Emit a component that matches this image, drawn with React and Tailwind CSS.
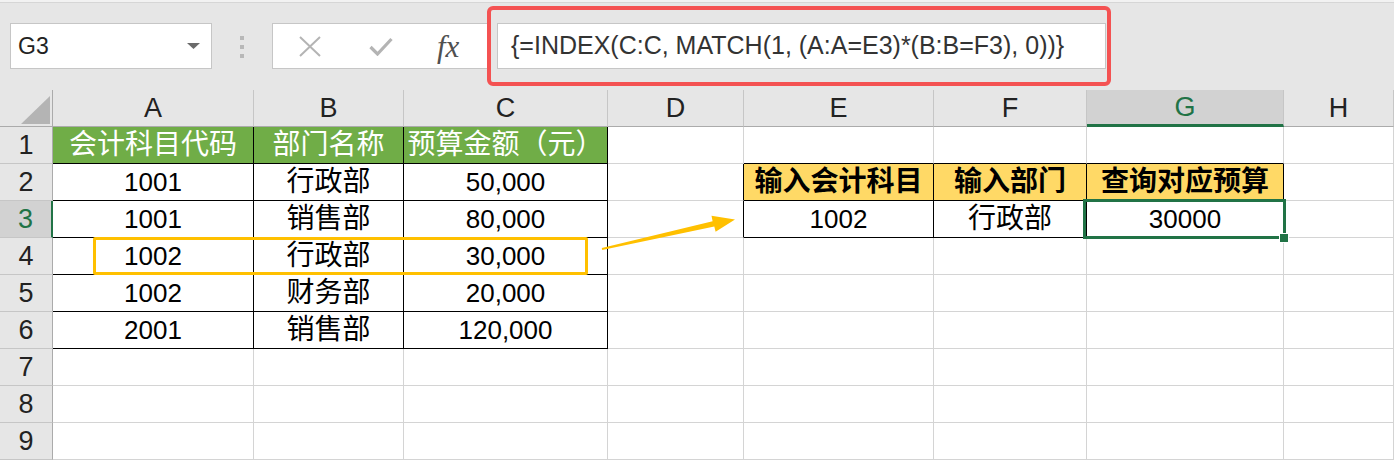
import React from 'react';

const FONT = { fontFamily: '"Liberation Sans", "Noto Sans CJK SC", sans-serif' };

const cols = ['A', 'B', 'C', 'D', 'E', 'F', 'G', 'H'];

const cells = {
  A1: { t: '会计科目代码', bg: 'green' },
  B1: { t: '部门名称', bg: 'green' },
  C1: { t: '预算金额（元）', bg: 'green' },
  A2: { t: '1001' }, B2: { t: '行政部' }, C2: { t: '50,000' },
  A3: { t: '1001' }, B3: { t: '销售部' }, C3: { t: '80,000' },
  A4: { t: '1002' }, B4: { t: '行政部' }, C4: { t: '30,000' },
  A5: { t: '1002' }, B5: { t: '财务部' }, C5: { t: '20,000' },
  A6: { t: '2001' }, B6: { t: '销售部' }, C6: { t: '120,000' },
  E2: { t: '输入会计科目', bg: 'yellow' },
  F2: { t: '输入部门', bg: 'yellow' },
  G2: { t: '查询对应预算', bg: 'yellow' },
  E3: { t: '1002' }, F3: { t: '行政部' }, G3: { t: '30000' },
};

const inTable = (c, r) => (c <= 2 && r >= 1 && r <= 6) || (c >= 4 && c <= 6 && r >= 2 && r <= 3);

const Cell = ({ c, r }) => {
  const key = cols[c] + r;
  const cell = cells[key];
  const rightBlack = inTable(c, r) || (c === 3 && (r === 2 || r === 3));
  const bottomBlack = inTable(c, r) || (r === 1 && c >= 4 && c <= 6);
  const isNum = cell && /^[0-9,]+$/.test(cell.t);
  let bg = 'bg-white';
  let text = 'text-black';
  if (cell?.bg === 'green') {
    bg = 'bg-[#70ad47]';
    text = 'text-white';
  } else if (cell?.bg === 'yellow') {
    bg = 'bg-[#ffd966]';
    text = 'text-black font-bold';
  }
  return (
    <div
      className={`flex items-center justify-center overflow-visible whitespace-nowrap border-r border-b ${bg} ${text} ${
        rightBlack ? 'border-r-black' : 'border-r-[#d4d4d4]'
      } ${bottomBlack ? 'border-b-black' : 'border-b-[#d4d4d4]'} ${isNum ? 'text-[26px]' : 'text-[28px]'}`}
    >
      {cell?.t}
    </div>
  );
};

const Toolbar = () => (
  <div className="relative h-[90px] bg-[#e6e6e6] border-t-2 border-t-[#f2f2f2]">
    <div className="h-px bg-[#d6d6d6]" />
    <div className="flex items-start pl-[10px] pt-[20px]">
      <div className="flex h-[46px] w-[202px] items-center justify-between border border-[#c6c6c6] bg-white pl-[7px] pr-[11px]">
        <span className="text-[23px] text-[#222]">G3</span>
        <svg width="13" height="6" viewBox="0 0 13 6">
          <path d="M0 0 L13 0 L6.5 6 Z" fill="#6b6b6b" />
        </svg>
      </div>
      <div className="ml-[28px] mt-[13px] flex flex-col gap-[5px]">
        <div className="h-1 w-1 bg-[#b8b8b8]" />
        <div className="h-1 w-1 bg-[#b8b8b8]" />
        <div className="h-1 w-1 bg-[#b8b8b8]" />
      </div>
      <div className="ml-[28px] flex h-[46px] w-[218px] items-center border border-[#c6c6c6] bg-white">
        <svg className="ml-[26px]" width="22" height="21" viewBox="0 0 22 21">
          <path d="M1 1 L21 20 M21 1 L1 20" stroke="#b4b4b4" strokeWidth="2" />
        </svg>
        <svg className="ml-[48px]" width="24" height="19" viewBox="0 0 24 19">
          <path d="M1.5 10 L8.5 17 L22.5 2" stroke="#b4b4b4" strokeWidth="3.2" fill="none" />
        </svg>
        <span
          className="ml-[44px] text-[31px] italic leading-none text-[#505050]"
          style={{ fontFamily: '"Liberation Serif", serif' }}
        >
          fx
        </span>
      </div>
      <div className="ml-[7px] flex h-[46px] w-[609px] items-center border border-[#c6c6c6] bg-white pl-[13px]">
        <span className="text-[25px] text-[#333]">{'{=INDEX(C:C, MATCH(1, (A:A=E3)*(B:B=F3), 0))}'}</span>
      </div>
    </div>
    <div className="absolute left-[487px] top-[4px] h-[80px] w-[624px] rounded-md border-4 border-[#f45252]" />
  </div>
);

const Sheet = () => {
  const rows = [1, 2, 3, 4, 5, 6, 7, 8, 9];
  return (
    <div className="relative grid grid-cols-[53px_201px_150px_204px_136px_190px_153px_197px_1fr] auto-rows-[37px]">
      <div className="relative border-r border-b border-[#ababab] bg-[#e6e6e6]">
        <svg className="absolute left-[21px] top-[6px]" width="29" height="28" viewBox="0 0 29 28">
          <path d="M0 28 L29 28 L29 0 Z" fill="#b4b4b4" />
        </svg>
      </div>
      {cols.map((k) =>
        k === 'G' ? (
          <div
            key={k}
            className="flex items-center justify-center border-r border-r-[#c6c6c6] border-b-[3px] border-b-[#217346] bg-[#d2d2d2] text-[27px] text-[#217346]"
          >
            {k}
          </div>
        ) : (
          <div
            key={k}
            className="flex items-center justify-center border-r border-r-[#c6c6c6] border-b border-b-[#ababab] bg-[#e6e6e6] text-[27px] text-[#222]"
          >
            {k}
          </div>
        )
      )}
      {rows.map((r) => (
        <React.Fragment key={r}>
          {r === 3 ? (
            <div className="flex items-center justify-center border-r-2 border-r-[#217346] border-b border-b-[#c6c6c6] bg-[#d2d2d2] text-[27px] text-[#217346]">
              {r}
            </div>
          ) : (
            <div className="flex items-center justify-center border-r border-r-[#ababab] border-b border-b-[#c6c6c6] bg-[#e6e6e6] text-[27px] text-[#222]">
              {r}
            </div>
          )}
          {cols.map((k, c) => (
            <Cell key={k} c={c} r={r} />
          ))}
        </React.Fragment>
      ))}

      {/* highlighted source row */}
      <div className="absolute left-[93px] top-[147px] h-[38px] w-[495px] rounded-[2px] border-[3px] border-[#ffc000]" />

      {/* active cell G3 */}
      <div className="absolute left-[1083px] top-[109px] h-[40px] w-[203px] border-[3px] border-[#217346]" />
      <div className="absolute left-[1279px] top-[143px] h-[10px] w-[10px] border border-white bg-[#217346]" />
    </div>
  );
};

export default function App() {
  return (
    <div className="relative h-[460px] w-[1394px] overflow-hidden bg-white" style={FONT}>
      <Toolbar />
      <Sheet />
      <svg className="pointer-events-none absolute left-0 top-0" width="1394" height="460" viewBox="0 0 1394 460">
        <polygon
          points="601.8,248.1 712.6,221.2 711.5,215.8 735,219.5 715.6,231.8 714.3,226.6 602.2,250.1"
          fill="#ffc000"
        />
      </svg>
    </div>
  );
}
